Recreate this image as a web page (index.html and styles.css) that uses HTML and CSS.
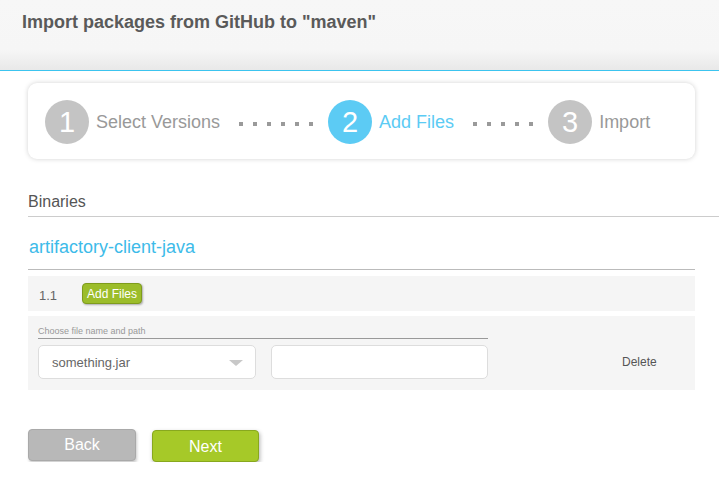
FILE: index.html
```html
<!DOCTYPE html>
<html>
<head>
<meta charset="utf-8">
<link rel="stylesheet" href="styles.css">
</head>
<body>
<header class="header">
  <h1 class="title">Import packages from GitHub to "maven"</h1>
</header>
<main class="main">
  <div class="stepper">
    <div class="step">
      <span class="circle">1</span>
      <span class="label">Select Versions</span>
    </div>
    <div class="dots"><i></i><i></i><i></i><i></i><i></i><i></i></div>
    <div class="step active">
      <span class="circle">2</span>
      <span class="label">Add Files</span>
    </div>
    <div class="dots"><i></i><i></i><i></i><i></i><i></i></div>
    <div class="step">
      <span class="circle">3</span>
      <span class="label">Import</span>
    </div>
  </div>

  <h2 class="section">Binaries</h2>

  <div class="package">
    <h3 class="pkg-name">artifactory-client-java</h3>
    <div class="version-row">
      <span class="version">1.1</span>
      <button class="btn-small">Add Files</button>
    </div>
    <div class="file-row">
      <div class="file-fields">
        <div class="field-label">Choose file name and path</div>
        <div class="inputs">
          <div class="select">
            <span>something.jar</span>
            <span class="arrow"></span>
          </div>
          <div class="text-input"></div>
        </div>
      </div>
      <span class="delete">Delete</span>
    </div>
  </div>

  <div class="actions">
    <button class="btn btn-back">Back</button>
    <button class="btn btn-next">Next</button>
  </div>
</main>
</body>
</html>
```

FILE: styles.css
```css
* { box-sizing: border-box; }
body {
  margin: 0;
  font-family: "Liberation Sans", Arial, sans-serif;
  background: #fff;
  color: #555;
}
.header {
  height: 71px;
  background: linear-gradient(to bottom, #f7f7f7 0px, #f6f6f6 50px, #e9e9e9 69px);
  border-bottom: 1px solid #3cc4ef;
  padding: 12px 0 0 22px;
}
.title {
  margin: 0;
  font-size: 18px;
  font-weight: bold;
  color: #5a5a5a;
  letter-spacing: 0;
}
.main {
  padding: 12px 0 0 28px;
}
.stepper {
  margin-right: 24px;
  height: 76px;
  background: #fff;
  border-radius: 9px;
  box-shadow: 0 0 5px rgba(0,0,0,0.18);
  display: flex;
  align-items: center;
  padding: 2px 0 0 17px;
}
.step {
  display: flex;
  align-items: center;
}
.circle {
  width: 44px;
  height: 44px;
  border-radius: 50%;
  background: #c4c4c4;
  color: #fff;
  font-size: 29px;
  display: flex;
  align-items: center;
  justify-content: center;
  padding-top: 1px;
}
.label {
  margin-left: 7px;
  font-size: 18px;
  color: #999;
  padding-top: 1px;
}
.step.active .circle { background: #5ccbf4; }
.step.active .label { color: #5ccbf4; }
.dots {
  display: flex;
  gap: 10px;
  margin: 0 15px 0 19px;
  padding-top: 3px;
}
.dots i {
  width: 4px;
  height: 4px;
  background: #9a9a9a;
  display: block;
}
.section {
  margin: 34px 0 0 0;
  padding-bottom: 5px;
  font-size: 16px;
  font-weight: normal;
  color: #555;
  border-bottom: 1px solid #ccc;
}
.package {
  margin-right: 24px;
}
.pkg-name {
  margin: 0;
  padding: 20px 0 11px 1px;
  font-size: 18px;
  font-weight: normal;
  color: #3dbbe9;
  border-bottom: 1px solid #bbb;
}
.version-row {
  margin-top: 6px;
  height: 35px;
  background: #f5f5f5;
  display: flex;
  align-items: center;
  padding-left: 11px;
}
.version {
  font-size: 13px;
  color: #666;
  width: 43px;
  padding-top: 3px;
}
.btn-small {
  font-family: inherit;
  font-size: 12px;
  color: #fff;
  background: #9cbd2a;
  border: 1px solid #7f9c1c;
  border-radius: 4px;
  height: 21px;
  padding: 0 4px;
  box-shadow: 1px 1px 2px rgba(0,0,0,0.3);
}
.file-row {
  margin-top: 5px;
  height: 74px;
  background: #f5f5f5;
  display: flex;
  align-items: flex-start;
  padding: 10px 0 0 10px;
}
.file-fields {
  width: 450px;
}
.field-label {
  font-size: 9px;
  color: #999;
  padding-bottom: 2px;
  border-bottom: 1px solid #999;
}
.inputs {
  display: flex;
  gap: 15px;
  margin-top: 6px;
}
.select, .text-input {
  height: 34px;
  background: #fff;
  border: 1px solid #ddd;
  border-radius: 5px;
}
.select {
  width: 218px;
  display: flex;
  align-items: center;
  justify-content: space-between;
  padding: 0 12px 0 13px;
  font-size: 13px;
  color: #666;
}
.arrow {
  width: 0;
  height: 0;
  border-left: 7px solid transparent;
  border-right: 7px solid transparent;
  border-top: 6px solid #c8c8c8;
  margin-top: 2px;
}
.text-input { width: 217px; }
.delete {
  margin-left: 134px;
  margin-top: 29px;
  font-size: 12px;
  color: #555;
}
.actions {
  display: flex;
  gap: 16px;
  margin-top: 39px;
  align-items: flex-start;
}
.btn {
  font-family: inherit;
  font-size: 16px;
  color: #fff;
  width: 108px;
  height: 32px;
  border-radius: 4px;
}
.btn-back {
  background: #b8b8b8;
  border: 1px solid #a9a9a9;
  padding-bottom: 1px;
  box-shadow: 1px 2px 3px rgba(0,0,0,0.2);
}
.btn-next {
  background: #a6c928;
  border: 1px solid #88a81e;
  margin-top: 1px;
  padding-top: 2px;
  width: 107px;
  box-shadow: 1px 2px 4px rgba(0,0,0,0.3);
}
```
